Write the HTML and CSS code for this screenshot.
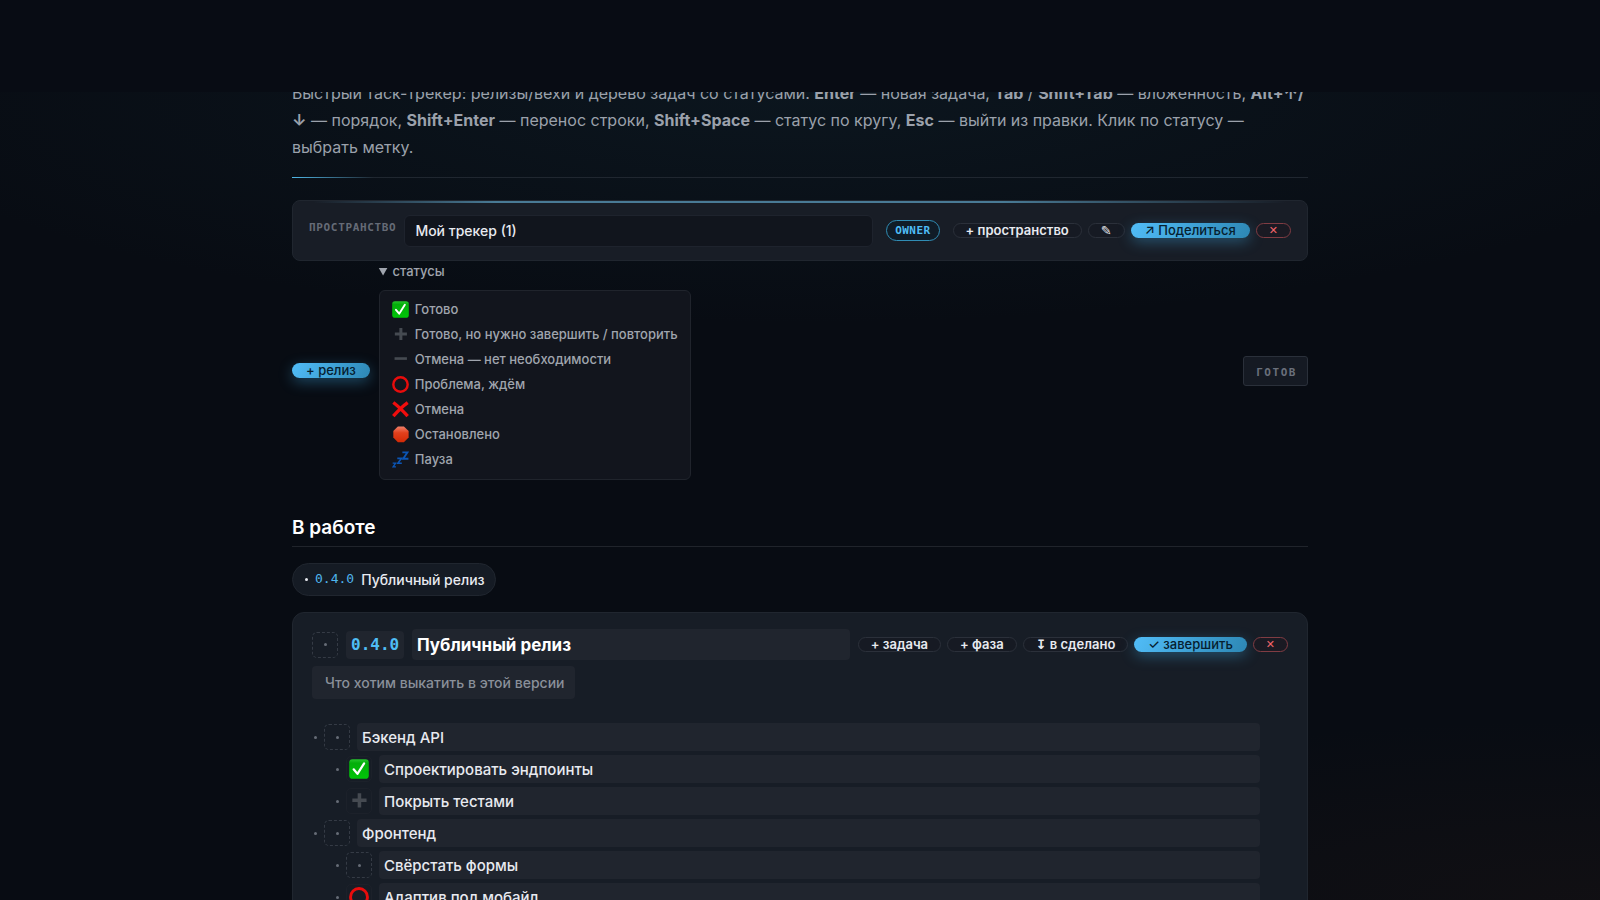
FILE: index.html
```html
<!DOCTYPE html>
<html lang="ru">

<head>
    <meta charset="utf-8">
    <title>Трекер</title>
    <link rel="stylesheet" href="styles.css">
</head>

<body>
    <!-- status icons -->
    <svg class="sprite" aria-hidden="true">
        <defs>
            <linearGradient id="green" x1="0" y1="0" x2="0" y2="1">
                <stop offset="0" stop-color="#27c52c" />
                <stop offset="0.2" stop-color="#04ae0b" />
                <stop offset="1" stop-color="#00c508" />
            </linearGradient>
            <linearGradient id="red" x1="0" y1="0" x2="0" y2="1">
                <stop offset="0" stop-color="#f0806a" />
                <stop offset="0.4" stop-color="#e2401c" />
                <stop offset="1" stop-color="#d32a06" />
            </linearGradient>
            <symbol id="done" viewBox="0 0 18 18">
                <rect x="0.2" y="0.2" width="17.6" height="17.6" rx="3" fill="url(#green)" />
                <path d="M4.2 9.3 L7.6 13.4 L13.6 4" fill="none" stroke="#fff" stroke-width="2" stroke-linecap="round" stroke-linejoin="round" />
            </symbol>
            <symbol id="plus" viewBox="0 0 18 18">
                <path d="M9.4 2 V14.8 M3 8.4 H15.8" stroke="#454a51" stroke-width="3.2" />
            </symbol>
            <symbol id="minus" viewBox="0 0 18 18">
                <path d="M2.7 8 H15.8" stroke="#454a51" stroke-width="2.8" />
            </symbol>
            <symbol id="problem" viewBox="0 0 18 18">
                <circle cx="9" cy="9" r="7.6" fill="none" stroke="#e80c0c" stroke-width="2.6" />
            </symbol>
            <symbol id="cross" viewBox="0 0 18 18">
                <path d="M1.4 1.6 Q8 6.6 16.6 16 M16.6 1.6 Q9.6 6.6 1.4 16" fill="none" stroke="#f00d0d" stroke-width="3.6" />
            </symbol>
            <symbol id="stop" viewBox="0 0 18 18">
                <path d="M6.2 0.6 H12.6 L17.6 5.4 V12.2 L12.6 17.2 H6.2 L1.4 12.2 V5.4 Z" fill="url(#red)" />
            </symbol>
            <symbol id="pause" viewBox="0 0 18 18">
                <g fill="none" stroke="#0b55b5">
                    <path d="M11 1.4 H16.4 L11.8 8.2 H17.4" stroke-width="2" />
                    <path d="M5.6 7.8 H10 L6.2 13 H10.4" stroke-width="1.7" />
                    <path d="M0.7 12.9 H3.8 L1.2 16.8 H4.2" stroke-width="1.4" />
                </g>
            </symbol>
        </defs>
    </svg>

    <div class="app">
        <header class="topbar"></header>
        <main class="page">
            <p class="lead">Быстрый таск-трекер: релизы/вехи и дерево задач со статусами. <b>Enter</b> — новая задача, <b>Tab</b> / <b>Shift+Tab</b> — вложенность, <b>Alt+↑/<wbr>↓</b> — порядок, <b>Shift+Enter</b> — перенос строки, <b>Shift+Space</b> — статус по кругу, <b>Esc</b> — выйти из правки. Клик по статусу — выбрать метку.</p>
            <div class="divider"></div>

            <section class="space">
                <label class="space-label" for="space">Пространство</label>
                <select class="space-select" id="space">
                    <option>Мой трекер (1)</option>
                </select>
                <span class="role">OWNER</span>
                <div class="actions">
                    <button class="btn">+ пространство</button>
                    <button class="btn" aria-label="Переименовать">✎</button>
                    <button class="btn primary">↗ Поделиться</button>
                    <button class="btn danger" aria-label="Удалить пространство">✕</button>
                </div>
            </section>

            <section class="toolbar">
                <button class="btn primary">+ релиз</button>
                <details class="legend" open>
                    <summary>статусы</summary>
                    <ul>
                        <li><svg><use href="#done" /></svg>Готово</li>
                        <li><svg><use href="#plus" /></svg>Готово, но нужно завершить / повторить</li>
                        <li><svg><use href="#minus" /></svg>Отмена — нет необходимости</li>
                        <li><svg><use href="#problem" /></svg>Проблема, ждём</li>
                        <li><svg><use href="#cross" /></svg>Отмена</li>
                        <li><svg><use href="#stop" /></svg>Остановлено</li>
                        <li><svg><use href="#pause" /></svg>Пауза</li>
                    </ul>
                </details>
                <span class="ready">готов</span>
            </section>

            <h2>В работе</h2>
            <nav>
                <a class="chip" href="#release"><i class="dot"></i><span class="chip-version">0.4.0</span>Публичный релиз</a>
            </nav>

            <article class="release" id="release">
                <div class="release-head">
                    <button class="status empty" aria-label="Статус релиза"><i class="dot"></i></button>
                    <input class="field version" aria-label="Версия" value="0.4.0">
                    <input class="field title" aria-label="Название релиза" value="Публичный релиз">
                    <div class="actions">
                        <button class="btn">+ задача</button>
                        <button class="btn">+ фаза</button>
                        <button class="btn">↧ в сделано</button>
                        <button class="btn primary">✓ завершить</button>
                        <button class="btn danger" aria-label="Удалить релиз">✕</button>
                    </div>
                </div>
                <input class="field goal" aria-label="Цель релиза" placeholder="Что хотим выкатить в этой версии">

                <ul class="tasks">
                    <li class="task">
                        <i class="dot"></i>
                        <button class="status empty" aria-label="Статус"><i class="dot"></i></button>
                        <input class="field" aria-label="Задача" value="Бэкенд API">
                    </li>
                    <li class="task sub">
                        <i class="dot"></i>
                        <button class="status" aria-label="Готово"><svg><use href="#done" /></svg></button>
                        <input class="field" aria-label="Задача" value="Спроектировать эндпоинты">
                    </li>
                    <li class="task sub">
                        <i class="dot"></i>
                        <button class="status" aria-label="Готово, но нужно завершить"><svg><use href="#plus" /></svg></button>
                        <input class="field" aria-label="Задача" value="Покрыть тестами">
                    </li>
                    <li class="task">
                        <i class="dot"></i>
                        <button class="status empty" aria-label="Статус"><i class="dot"></i></button>
                        <input class="field" aria-label="Задача" value="Фронтенд">
                    </li>
                    <li class="task sub">
                        <i class="dot"></i>
                        <button class="status empty" aria-label="Статус"><i class="dot"></i></button>
                        <input class="field" aria-label="Задача" value="Свёрстать формы">
                    </li>
                    <li class="task sub">
                        <i class="dot"></i>
                        <button class="status" aria-label="Проблема, ждём"><svg><use href="#problem" /></svg></button>
                        <input class="field" aria-label="Задача" value="Адаптив под мобайл">
                    </li>
                </ul>
            </article>
        </main>
    </div>
</body>

</html>
```
FILE: styles.css
```css
* {
    box-sizing: border-box;
}

body {
    margin: 0;
    background-color: #080c13;
    color: #e8eaf0;
    font-family: Inter, "DejaVu Sans", sans-serif;
    font-size: 15px;
    font-weight: 500;
}

button,
input,
select {
    font-family: inherit;
    font-weight: inherit;
    color: inherit;
}

.sprite {
    position: absolute;
    width: 0;
    height: 0;
}

.app {
    height: 100vh;
    overflow: hidden;
    background:
        radial-gradient(ellipse 60% 26% at 50% 10%, rgba(28, 66, 82, 0.18), transparent),
        radial-gradient(ellipse 50% 20% at 100% 100%, rgba(70, 36, 20, 0.14), transparent);
}

.topbar {
    position: sticky;
    top: 0;
    z-index: 1;
    height: 92px;
    background-color: #080c14;
}

.page {
    max-width: 1016px;
    margin: -12px auto 0;
}

.lead {
    margin: 0;
    color: #9ba1ab;
    font-size: 16px;
    font-weight: 400;
    line-height: 27px;
}

.divider {
    height: 1px;
    margin: 16px 0 22px;
    background: linear-gradient(90deg, #4fb8e8, #202730 8%, #202730);
}

.space {
    position: relative;
    display: flex;
    align-items: center;
    gap: 8px;
    height: 61px;
    padding: 0 16px;
    border: 1px solid #20262f;
    border-radius: 8px;
    background-color: #181d26;
}

/* glow along the top edge */
.space::before {
    content: "";
    position: absolute;
    top: 0;
    left: 0;
    right: 0;
    height: 2px;
    background: linear-gradient(90deg, transparent 2%, #497a95 20%, #497a95 70%, transparent 98%);
}

.space-label {
    padding-bottom: 6px;
    color: #656b76;
    font-family: "DejaVu Sans Mono", monospace;
    font-size: 11px;
    font-weight: bold;
    letter-spacing: 0.06em;
    text-transform: uppercase;
}

.space-select {
    flex: 1;
    height: 32px;
    padding: 0 10px;
    border: 1px solid #1e232d;
    border-radius: 6px;
    appearance: none;
    background-color: #11151d;
    font-size: 14px;
}

.role {
    margin: 0 5px;
    padding: 0 8px;
    border: 1px solid #308cb4;
    border-radius: 11px;
    background-color: #101c27;
    color: #4fbdf5;
    font-family: "DejaVu Sans Mono", monospace;
    font-size: 11px;
    font-weight: bold;
    line-height: 19px;
    letter-spacing: 0.04em;
}

.actions {
    display: flex;
    gap: 6px;
}

.btn {
    height: 15px;
    padding: 0 12px 3px;
    border: 1px solid #2b303a;
    border-radius: 8px;
    background-color: #161a23;
    font-size: 13px;
    font-weight: 600;
    line-height: 12px;
    white-space: nowrap;
}

.primary {
    padding: 0 13px 3px;
    border-color: transparent;
    background: linear-gradient(120deg, #51bdf8, #2d87b4) border-box;
    box-shadow: 0 4px 14px rgba(60, 160, 215, 0.4);
    color: #06202f;
    font-weight: 500;
}

.danger {
    padding-bottom: 1px;
    border-color: #803c43;
    background-color: #1a1a23;
    color: #f0646a;
    font-size: 11px;
}

.toolbar {
    display: flex;
    align-items: center;
    gap: 9px;
}

.legend {
    color: #a0a5ae;
    font-size: 13px;
}

.legend summary {
    line-height: 21px;
}

.legend ul {
    margin: 8px 0 0;
    padding: 6px 12px 7px;
    border: 1px solid #20242c;
    border-radius: 6px;
    background-color: #12151d;
    list-style: none;
}

.legend li {
    display: flex;
    align-items: center;
    gap: 6px;
    line-height: 25px;
}

.legend svg {
    width: 17px;
    height: 17px;
}

.ready {
    margin-left: auto;
    padding: 3px 10px 0 12px;
    border: 1px solid #2a303a;
    border-radius: 3px;
    background-color: #151a23;
    color: #6a707b;
    font-family: "DejaVu Sans Mono", monospace;
    font-size: 11px;
    font-weight: bold;
    line-height: 25px;
    letter-spacing: 0.14em;
    text-transform: uppercase;
}

h2 {
    margin: 34px 0 16px;
    padding-bottom: 4px;
    border-bottom: 1px solid #20242b;
    color: #fff;
    font-size: 19px;
    font-weight: 600;
    line-height: 28px;
}

.dot {
    flex: none;
    width: 3px;
    height: 3px;
    border-radius: 50%;
    background-color: #666c76;
}

.chip {
    display: inline-flex;
    align-items: center;
    gap: 7px;
    height: 33px;
    padding: 0 10px 0 12px;
    border: 1px solid #20262f;
    border-radius: 17px;
    background-color: #151b24;
    color: #e8eaf0;
    font-size: 14px;
    text-decoration: none;
}

.chip .dot {
    background-color: #e8eaf0;
}

.chip-version {
    padding-bottom: 2px;
    color: #4fb4ec;
    font-family: "DejaVu Sans Mono", monospace;
    font-size: 13px;
}

.release {
    margin-top: 16px;
    padding: 16px 19px;
    border: 1px solid #20262f;
    border-radius: 12px;
    background-color: #171d26;
}

.release-head {
    display: flex;
    align-items: center;
    gap: 8px;
}

.field {
    min-width: 0;
    height: 28px;
    padding: 0 5px;
    border: 0;
    border-radius: 4px;
    background-color: #20252e;
    font-size: 15px;
}

.version {
    width: 58px;
    color: #4fbdf5;
    font-family: "DejaVu Sans Mono", monospace;
    font-size: 16px;
    font-weight: bold;
}

.title {
    flex: 1;
    height: 31px;
    color: #fff;
    font-size: 17px;
    font-weight: 700;
}

.goal {
    display: block;
    width: 263px;
    height: 33px;
    margin-top: 6px;
    padding: 0 0 0 13px;
    font-size: 14px;
}

.goal::placeholder {
    color: #8a909a;
}

.status {
    display: flex;
    flex: none;
    align-items: center;
    justify-content: center;
    width: 26px;
    height: 26px;
    padding: 0;
    border: 1px solid #1c212a;
    border-radius: 5px;
    background: none;
}

.empty {
    border: 1px dashed #353b45;
}

.status svg {
    flex: none;
    width: 20px;
    height: 20px;
}

.tasks {
    display: grid;
    gap: 4px;
    margin: 24px 28px 0 0;
    padding: 0 0 0 2px;
    list-style: none;
}

.task {
    display: flex;
    align-items: center;
    gap: 7px;
}

.sub {
    padding-left: 22px;
}

.task .field {
    flex: 1;
}
```
